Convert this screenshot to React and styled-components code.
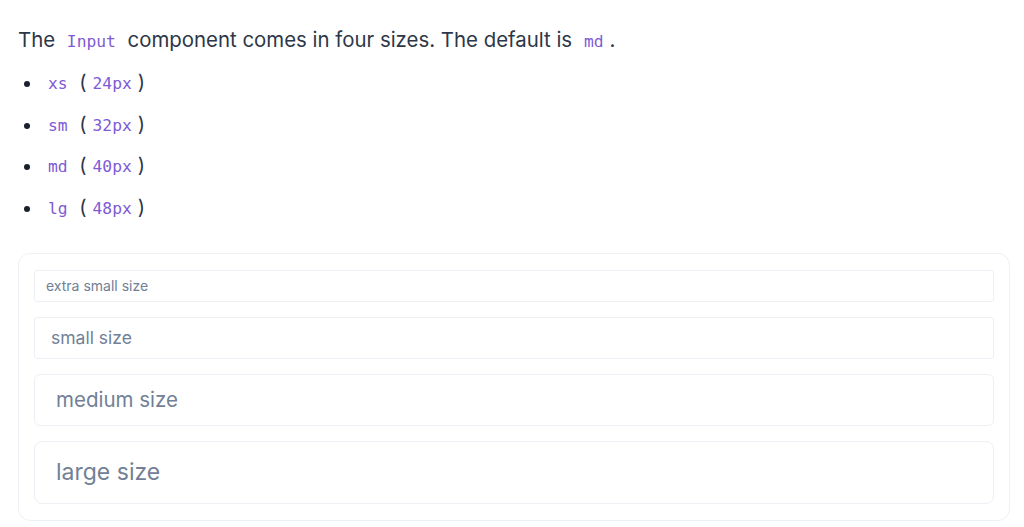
import React from 'react';
import styled, { createGlobalStyle } from 'styled-components';

const GlobalStyle = createGlobalStyle`
  html, body {
    margin: 0;
    padding: 0;
    background: #ffffff;
  }
  body {
    font-family: Inter, "Noto Sans", sans-serif;
    color: #2d3748;
  }
`;

const Page = styled.div`
  padding: 24px 14px 0 18px;
  width: 1024px;
  box-sizing: border-box;
`;

const Paragraph = styled.p`
  margin: 0;
  font-size: 20.4px;
  line-height: 32px;
  color: #2d3748;
`;

const Code = styled.code`
  font-family: "DejaVu Sans Mono", "Liberation Mono", monospace;
  font-size: 16.3px;
  line-height: 1;
  color: #805ad5;
  padding: 0 6px;
`;

const List = styled.ul`
  margin: 10px 0 0 0;
  padding: 0 0 0 24px;
  list-style: disc;
`;

const Item = styled.li`
  font-size: 20px;
  line-height: 32px;
  height: 32px;
  margin-bottom: 9.6px;
  &::marker {
    font-size: 18px;
    color: #1a202c;
  }
`;

const Demo = styled.div`
  margin-top: 30px;
  border: 1px solid #edf0f4;
  border-radius: 12px;
  padding: 16px 15px 16px 15px;
  display: flex;
  flex-direction: column;
  gap: 15px;
  width: 992px;
  box-sizing: border-box;
`;

const sizes = {
  xs: { h: 32, fs: 14, px: 11, r: 3 },
  sm: { h: 42, fs: 17.5, px: 16, r: 3 },
  md: { h: 52, fs: 20.5, px: 21, r: 6 },
  lg: { h: 63, fs: 23, px: 21, r: 8 },
};

const Field = styled.input`
  display: block;
  width: 100%;
  box-sizing: border-box;
  height: ${p => sizes[p.$size].h}px;
  font-family: Inter, "Noto Sans", sans-serif;
  font-size: ${p => sizes[p.$size].fs}px;
  padding: 0 ${p => sizes[p.$size].px}px;
  border: 1px solid #eceff3;
  border-radius: ${p => sizes[p.$size].r}px;
  background: #ffffff;
  color: #1a202c;
  outline: none;
  &::placeholder {
    color: #718096;
  }
`;

const items = [
  ['xs', '24px'],
  ['sm', '32px'],
  ['md', '40px'],
  ['lg', '48px'],
];

export default function App() {
  return (
    <>
      <GlobalStyle />
      <Page>
        <Paragraph>
          The <Code>Input</Code> component comes in four sizes. The default is <Code>md</Code>.
        </Paragraph>
        <List>
          {items.map(([k, v]) => (
            <Item key={k}>
              <Code>{k}</Code> (<Code>{v}</Code>)
            </Item>
          ))}
        </List>
        <Demo>
          <Field $size="xs" placeholder="extra small size" />
          <Field $size="sm" placeholder="small size" />
          <Field $size="md" placeholder="medium size" />
          <Field $size="lg" placeholder="large size" />
        </Demo>
      </Page>
    </>
  );
}
